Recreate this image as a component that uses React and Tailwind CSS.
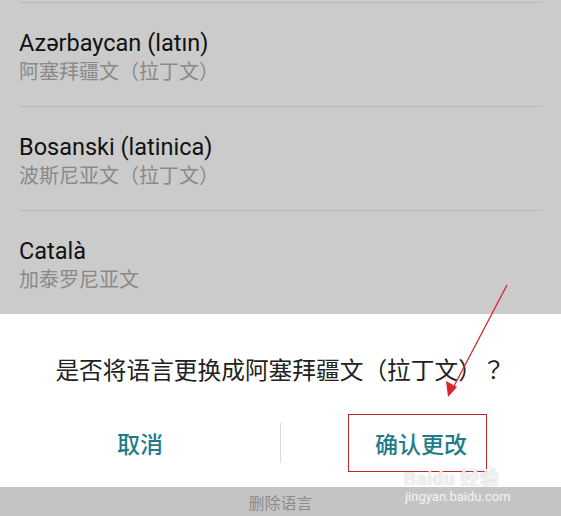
const items = [
  { name: "Azərbaycan (latın)", zh: "阿塞拜疆文（拉丁文）" },
  { name: "Bosanski (latinica)", zh: "波斯尼亚文（拉丁文）" },
  { name: "Català", zh: "加泰罗尼亚文" },
];

const latin = { fontFamily: 'Roboto, "Noto Sans CJK SC", sans-serif' };
const cjk = { fontFamily: '"Noto Sans CJK SC", sans-serif' };
const centered = { fontFamily: '"Noto Sans CJK TC", "Noto Sans CJK SC", sans-serif' };

// full-width punctuation sits centred in its box on the device, as in TC fonts
function Zh({ text }) {
  return text.split(/([（）？])/).map((part, i) =>
    /^[（）？]$/.test(part) ? <span key={i} style={centered}>{part}</span> : part
  );
}

export default function App() {
  return (
    <div className="relative w-[561px] h-[516px] overflow-hidden bg-[#cbcbcb] [text-spacing-trim:space-all]" style={cjk}>
      <div className="h-[2px]" />
      <div className="px-[19px]">
        {items.map((it) => (
          <div key={it.name} className="border-t border-[#b9b9b9] pt-[26px] pb-[21px]">
            <div className="text-[23.5px] leading-[28px] text-[#111]" style={latin}>{it.name}</div>
            <div className="text-[20px] leading-[28px] text-[#8a8a8a]"><Zh text={it.zh} /></div>
          </div>
        ))}
      </div>

      <div className="bg-white h-[173px] flex flex-col">
        <div className="h-[109px] flex items-center justify-center pt-[2px]">
          <span className="text-[23.7px] text-[#222]"><Zh text="是否将语言更换成阿塞拜疆文（拉丁文）？" /></span>
        </div>
        <div className="flex items-center h-[40px]">
          <div className="flex-1 text-center text-[23px] text-[#1d7d8a] font-medium">取消</div>
          <div className="w-px h-[40px] bg-[#dcdcdc]" />
          <div className="flex-1 text-center text-[23px] text-[#1d7d8a] font-medium">确认更改</div>
        </div>
      </div>

      <div className="h-[29px] bg-[#c4c4c4] flex items-center justify-center">
        <span className="text-[16px] text-[#8c8c8c]">删除语言</span>
      </div>

      <div className="absolute left-[348px] top-[414px] w-[139px] h-[58px] border border-[#c0262b]" />

      <svg className="absolute left-0 top-0" width="561" height="516">
        <line x1="507" y1="285" x2="453" y2="388" stroke="#d8262a" strokeWidth="1.3" />
        <polygon points="448,397 446,381 457,387" fill="#d8262a" />
      </svg>

      <div className="absolute left-[404px] top-[467px] text-[19px] leading-[20px] font-bold text-white/80 tracking-wide [text-shadow:0_0_1px_#b0b0b0]" style={latin}>
        Baidu <span style={cjk}>经验</span>
      </div>
      <div className="absolute left-[405px] top-[489px] text-[13px] leading-[16px] text-white/80" style={latin}>
        jingyan.baidu.com
      </div>
    </div>
  );
}
